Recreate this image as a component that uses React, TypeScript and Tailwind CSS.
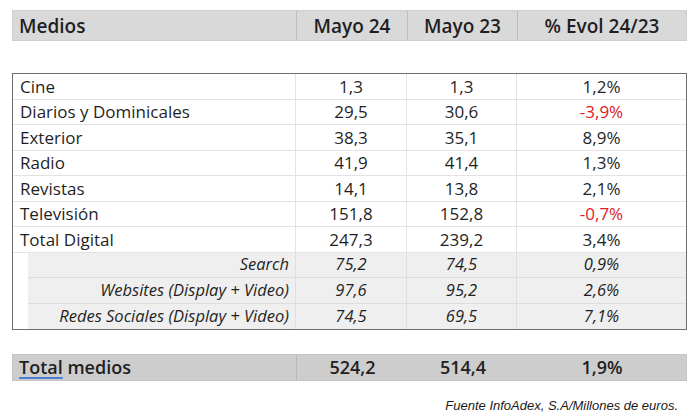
const rows = [
  { name: 'Cine', a: '1,3', b: '1,3', c: '1,2%' },
  { name: 'Diarios y Dominicales', a: '29,5', b: '30,6', c: '-3,9%', neg: true },
  { name: 'Exterior', a: '38,3', b: '35,1', c: '8,9%' },
  { name: 'Radio', a: '41,9', b: '41,4', c: '1,3%' },
  { name: 'Revistas', a: '14,1', b: '13,8', c: '2,1%' },
  { name: 'Televisión', a: '151,8', b: '152,8', c: '-0,7%', neg: true },
  { name: 'Total Digital', a: '247,3', b: '239,2', c: '3,4%' },
]

const subRows = [
  { name: 'Search', a: '75,2', b: '74,5', c: '0,9%' },
  { name: 'Websites (Display + Video)', a: '97,6', b: '95,2', c: '2,6%' },
  { name: 'Redes Sociales (Display + Video)', a: '74,5', b: '69,5', c: '7,1%' },
]

export default function App() {
  return (
    <div className="w-[700px] h-[418px] bg-white text-[#1f1f1f] font-['Open_Sans',sans-serif] pt-[10px] pl-[12px] pr-[13px]">
      {/* header bar */}
      <div className="flex h-[31px] bg-[#d9d9d9] border border-[#cfcfcf] text-[19px] font-semibold">
        <div className="w-[284px] flex items-center pl-[6px] pt-[1px] border-r border-[#bdbdbd]">Medios</div>
        <div className="w-[111px] flex items-center justify-center pt-[1px] border-r border-[#bdbdbd]">Mayo 24</div>
        <div className="w-[110px] flex items-center justify-center pt-[1px] border-r border-[#bdbdbd]">Mayo 23</div>
        <div className="flex-1 flex items-center justify-center pt-[1px]">% Evol 24/23</div>
      </div>

      {/* main table */}
      <div className="mt-[32px] border border-[#6e6e6e] text-[17px]">
        {rows.map((r) => (
          <div key={r.name} className="flex h-[25.5px] border-b border-[#e3e3e3]">
            <div className="w-[283px] flex items-center pl-[7px] border-r border-[#e3e3e3]">{r.name}</div>
            <div className="w-[111px] flex items-center justify-center border-r border-[#e3e3e3]">{r.a}</div>
            <div className="w-[110px] flex items-center justify-center border-r border-[#e3e3e3]">{r.b}</div>
            <div className={`flex-1 flex items-center justify-center ${r.neg ? 'text-[#e0201f]' : ''}`}>{r.c}</div>
          </div>
        ))}
        {subRows.map((r, i) => (
          <div key={r.name} className="flex h-[25.5px] italic text-[16.5px]">
            <div className="w-[15px] bg-white" />
            <div className={`flex flex-1 bg-[#efefef] ${i < subRows.length - 1 ? 'border-b border-[#dedede]' : ''}`}>
              <div className="w-[268px] flex items-center justify-end pr-[6px] border-r border-[#dedede]">{r.name}</div>
              <div className="w-[111px] flex items-center justify-center border-r border-[#dedede]">{r.a}</div>
              <div className="w-[110px] flex items-center justify-center border-r border-[#dedede]">{r.b}</div>
              <div className="flex-1 flex items-center justify-center">{r.c}</div>
            </div>
          </div>
        ))}
      </div>

      {/* total bar */}
      <div className="mt-[24px] flex h-[27px] bg-[#cdcdcd] border border-[#c4c4c4] text-[18px] font-semibold">
        <div className="w-[284px] flex items-center pl-[6px] border-r border-[#b8b8b8]">
          <span className="underline decoration-[#4a7fd4] decoration-[1.5px] underline-offset-[3px]">Total</span>
          <span>&nbsp;medios</span>
        </div>
        <div className="w-[111px] flex items-center justify-center">524,2</div>
        <div className="w-[110px] flex items-center justify-center">514,4</div>
        <div className="flex-1 flex items-center justify-center">1,9%</div>
      </div>

      <div className="mt-[15px] pr-[9px] text-right italic text-[13px] text-[#1a1a1a] font-['Liberation_Sans',Arial,sans-serif]">
        Fuente InfoAdex, S.A/Millones de euros.
      </div>
    </div>
  )
}
